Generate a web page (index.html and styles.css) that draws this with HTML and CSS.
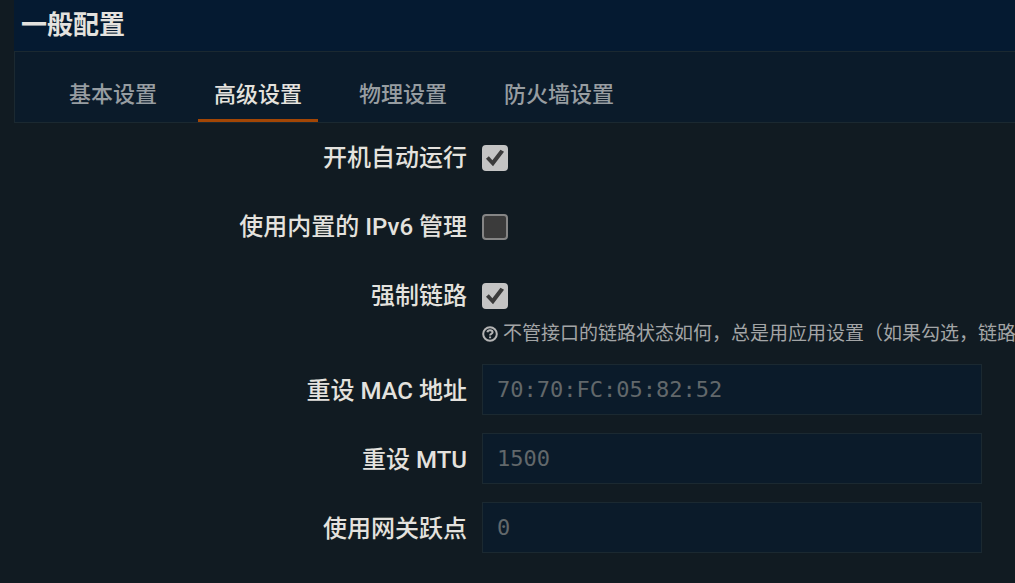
FILE: index.html
```html
<!DOCTYPE html>
<html lang="zh-CN">
<head>
<meta charset="utf-8">
<title>一般配置</title>
<link rel="stylesheet" href="styles.css">
</head>
<body>
<main class="section">
  <h3 class="title">一般配置</h3>
  <nav class="tabs">
    <a class="tab" href="#general">基本设置</a>
    <a class="tab active" href="#advanced">高级设置</a>
    <a class="tab" href="#physical">物理设置</a>
    <a class="tab" href="#firewall">防火墙设置</a>
  </nav>
  <form class="form">
    <div class="row">
      <label class="label" for="auto">开机自动运行</label>
      <div class="field"><input class="check" type="checkbox" id="auto" checked></div>
    </div>
    <div class="row">
      <label class="label" for="ipv6">使用内置的 IPv6 管理</label>
      <div class="field"><input class="check" type="checkbox" id="ipv6"></div>
    </div>
    <div class="row">
      <label class="label" for="link">强制链路</label>
      <div class="field">
        <input class="check" type="checkbox" id="link" checked>
        <p class="hint">
          <svg class="help" viewBox="0 0 16 16" aria-hidden="true"><circle cx="8" cy="8" r="6.8"/><path d="M5.4 6.3C5.7 4.7 6.8 4.3 8 4.3c1.500 0 2.600.7 2.600 2 0 1.700-2.500 1.500-2.500 3.100M8.100 10.600v1.700"/></svg>
          <span>不管接口的链路状态如何，总是用应用设置（如果勾选，链路</span>
        </p>
      </div>
    </div>
    <div class="row row-text">
      <label class="label" for="mac">重设 MAC 地址</label>
      <div class="field"><input class="text" type="text" id="mac" placeholder="70:70:FC:05:82:52"></div>
    </div>
    <div class="row row-text">
      <label class="label" for="mtu">重设 MTU</label>
      <div class="field"><input class="text" type="text" id="mtu" placeholder="1500"></div>
    </div>
    <div class="row row-text">
      <label class="label" for="metric">使用网关跃点</label>
      <div class="field"><input class="text" type="text" id="metric" placeholder="0"></div>
    </div>
  </form>
</main>
</body>
</html>
```
FILE: styles.css
```css
* { box-sizing: border-box; }

body {
  margin: 0;
  background: #111b22;
  color: #e4e2de;
  font-family: Roboto, "Noto Sans CJK SC", sans-serif;
  font-size: 24px;
  overflow-x: hidden;
}

.section { padding-left: 14px; }

.title {
  margin: 0;
  padding: 0 7px 1px;
  background: #051a31;
  font-size: 26px;
  font-weight: 700;
  line-height: 50px;
}

.tabs {
  display: flex;
  gap: 25px;
  padding: 19px 38px 0;
  background: #0b1b2a;
  border: 1px solid #1b2931;
  border-right: 0;
}

.tab {
  padding: 0 16px;
  border-bottom: 3px solid transparent;
  color: #979da1;
  font-size: 22px;
  font-weight: 500;
  line-height: 48px;
  text-decoration: none;
  white-space: nowrap;
}

.tab.active {
  color: #e4e2de;
  border-bottom-color: #a34605;
}

.form {
  display: grid;
  gap: 18px;
  padding: 10px 33px 30px 0;
}

.row {
  display: flex;
  gap: 15px;
}

.label {
  flex: 0 0 453px;
  font-weight: 500;
  line-height: 51px;
  text-align: right;
}

.row-text .label {
  padding-top: 4px;
  line-height: 47px;
}

.field {
  flex: 1;
  min-width: 0;
}

.check {
  appearance: none;
  display: grid;
  width: 26px;
  height: 26px;
  margin: 12px 0 13px;
  background: #3b3b3b;
  border: 2px solid #858585;
  border-radius: 4px;
}

.check:checked {
  background: #c4c4c4;
  border-color: #c4c4c4;
}

.check:checked::before {
  content: "";
  background: #3b3b3b;
  clip-path: polygon(9% 53%, 22% 42%, 38% 60%, 75% 12%, 91% 22%, 41% 87%);
}

.hint {
  display: flex;
  align-items: center;
  gap: 5px;
  margin: 0;
  color: #a3a5a6;
  font-size: 19px;
  line-height: 24px;
  white-space: nowrap;
}

.help {
  flex: none;
  width: 16px;
  height: 16px;
  fill: none;
  stroke: #b5b5b5;
  stroke-width: 2;
}

.text {
  display: block;
  width: 100%;
  max-width: 500px;
  height: 51px;
  padding: 0 14px;
  background: #0b1b2a;
  border: 1px solid #1b2931;
  border-radius: 0;
  color: #e4e2de;
  font-family: "DejaVu Sans Mono", monospace;
  font-size: 22px;
}

.text::placeholder { color: #62686b; opacity: 1; }
```
